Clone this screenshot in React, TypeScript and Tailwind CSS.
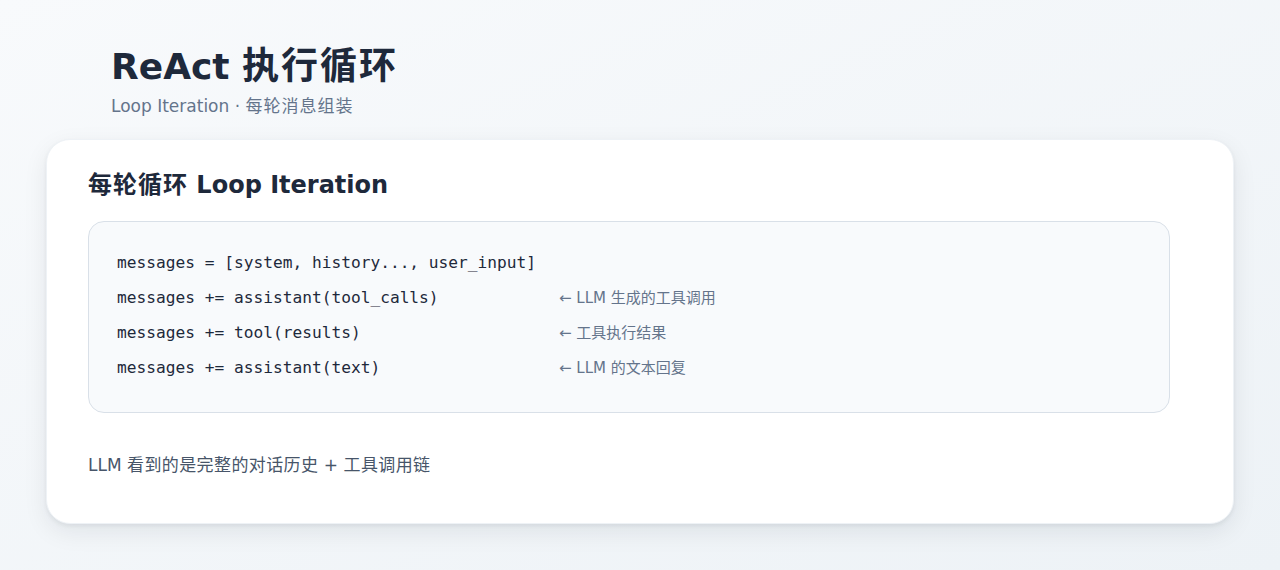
import React from "react";

type Step = {
  code: string;
  note?: string;
};

const steps: Step[] = [
  { code: "messages = [system, history..., user_input]" },
  { code: "messages += assistant(tool_calls)", note: "← LLM 生成的工具调用" },
  { code: "messages += tool(results)", note: "← 工具执行结果" },
  { code: "messages += assistant(text)", note: "← LLM 的文本回复" },
];

const sans = "font-['DejaVu_Sans','Noto_Sans_CJK_SC',sans-serif]";
const mono = "font-['DejaVu_Sans_Mono','Noto_Sans_CJK_SC',monospace]";

export default function App() {
  return (
    <div
      className={`${sans} min-h-[570px] w-full bg-linear-to-br from-[#f8fafc] to-[#edf2f6] px-[46px] pt-[47px] pb-[47px]`}
    >
      {/* header */}
      <div className="pl-[65px]">
        <h1 className="text-[36px] leading-[40px] font-bold text-[#1e293b]">
          ReAct <span className="text-[37px] tracking-[2px]">执行循环</span>
        </h1>
        <p className="mt-[7px] text-[17px] leading-[24px] text-[#64748b]">
          Loop Iteration · <span className="tracking-[1px]">每轮消息组装</span>
        </p>
      </div>

      {/* card */}
      <div className="mt-[21px] rounded-3xl border border-[#eef2f6] bg-white pt-[29px] pb-[46px] pl-[41px] pr-[63px] shadow-[0_2px_4px_rgba(15,23,42,0.06),0_8px_24px_rgba(15,23,42,0.08)]">
        <h2 className="text-[24px] leading-[32px] font-bold text-[#1e293b]">
          <span className="tracking-[1px]">每轮循环</span> Loop Iteration
        </h2>

        <div className="mt-5 rounded-2xl border border-[#d9e0e8] bg-[#f8fafc] pt-[24px] pb-[26px] pl-[28px] pr-6">
          {steps.map((s) => (
            <div key={s.code} className="flex h-[35px] items-center">
              <span
                className={`${mono} w-[442px] shrink-0 whitespace-pre text-[16.2px] text-[#1e293b]`}
              >
                {s.code}
              </span>
              {s.note && (
                <span className="text-[15px] text-[#64748b]">{s.note}</span>
              )}
            </div>
          ))}
        </div>

        <p className="mt-[40px] text-[17px] leading-[24px] text-[#475569]">
          LLM <span className="tracking-[0.4px]">看到的是完整的对话历史</span> +{" "}
          <span className="tracking-[0.4px]">工具调用链</span>
        </p>
      </div>
    </div>
  );
}
